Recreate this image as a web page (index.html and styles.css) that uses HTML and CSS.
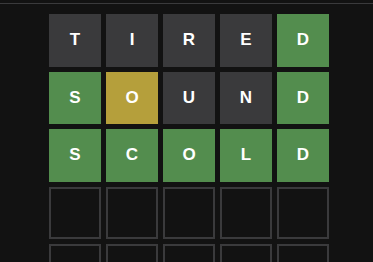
FILE: index.html
```html
<!DOCTYPE html>
<html>
<head>
<meta charset="utf-8">
<link rel="stylesheet" href="styles.css">
</head>
<body>
<header class="header"></header>
<main class="board-wrap">
  <div class="board">
    <div class="tile absent">T</div>
    <div class="tile absent">I</div>
    <div class="tile absent">R</div>
    <div class="tile absent">E</div>
    <div class="tile correct">D</div>
    <div class="tile correct">S</div>
    <div class="tile present">O</div>
    <div class="tile absent">U</div>
    <div class="tile absent">N</div>
    <div class="tile correct">D</div>
    <div class="tile correct">S</div>
    <div class="tile correct">C</div>
    <div class="tile correct">O</div>
    <div class="tile correct">L</div>
    <div class="tile correct">D</div>
    <div class="tile empty"></div>
    <div class="tile empty"></div>
    <div class="tile empty"></div>
    <div class="tile empty"></div>
    <div class="tile empty"></div>
    <div class="tile empty"></div>
    <div class="tile empty"></div>
    <div class="tile empty"></div>
    <div class="tile empty"></div>
    <div class="tile empty"></div>
  </div>
</main>
</body>
</html>
```

FILE: styles.css
```css
html, body {
  margin: 0;
  padding: 0;
  background: #121212;
  height: 100%;
  overflow: hidden;
}

.header {
  height: 3px;
  border-bottom: 1px solid #3a3a3c;
}

.board-wrap {
  padding: 10px 0 0 49px;
}

.board {
  display: grid;
  grid-template-columns: repeat(5, 52px);
  grid-auto-rows: 52.5px;
  column-gap: 5px;
  row-gap: 5px;
  width: 280px;
}

.tile {
  box-sizing: border-box;
  display: flex;
  align-items: center;
  justify-content: center;
  color: #ffffff;
  font-family: "Liberation Sans", Arial, sans-serif;
  font-weight: bold;
  font-size: 17px;
  text-transform: uppercase;
}

.absent { background: #3a3a3c; }
.correct { background: #538d4e; }
.present { background: #b59f3b; }
.empty { border: 2px solid #3a3a3c; }
```
